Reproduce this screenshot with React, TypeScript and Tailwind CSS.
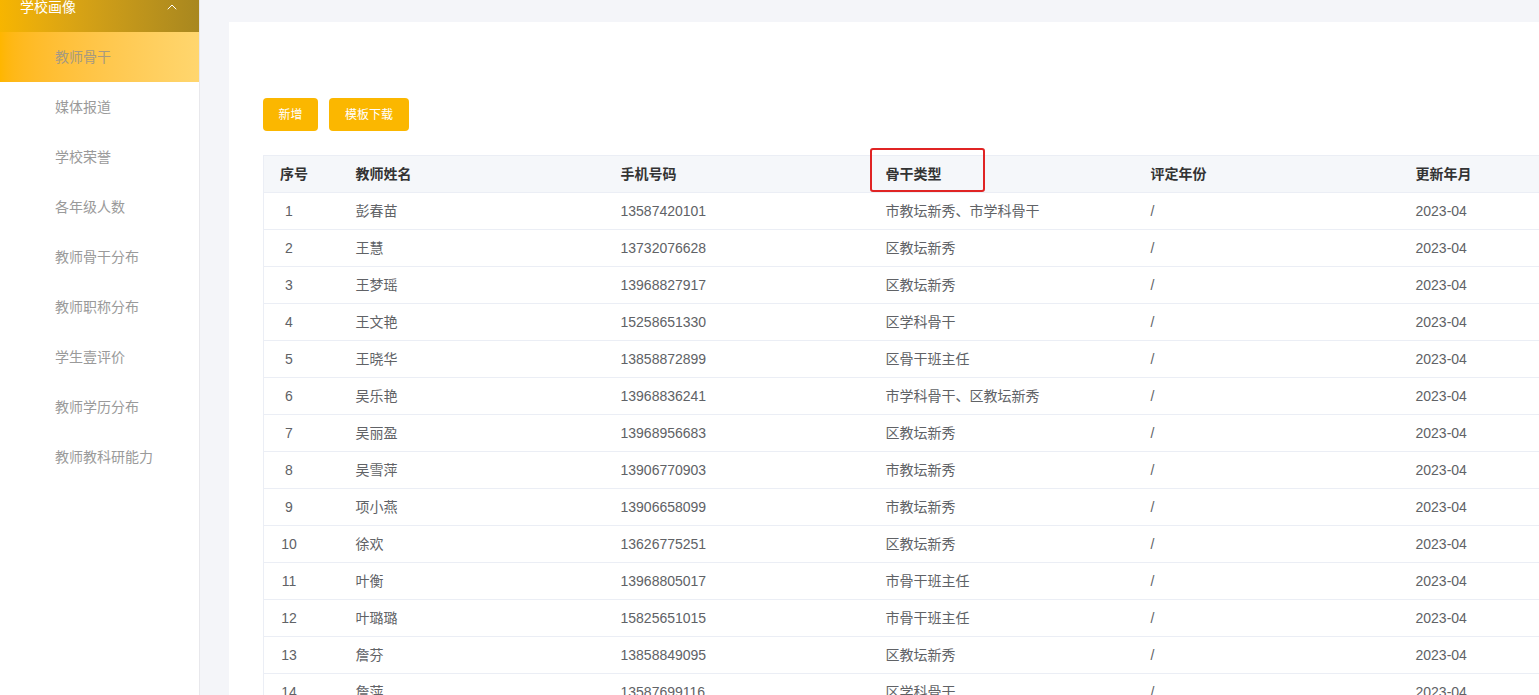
import { ChevronUp } from 'lucide-react';

const menu = ['媒体报道', '学校荣誉', '各年级人数', '教师骨干分布', '教师职称分布', '学生壹评价', '教师学历分布', '教师教科研能力'];

const rows: [string, string, string][] = [
  ['彭春苗', '13587420101', '市教坛新秀、市学科骨干'],
  ['王慧', '13732076628', '区教坛新秀'],
  ['王梦瑶', '13968827917', '区教坛新秀'],
  ['王文艳', '15258651330', '区学科骨干'],
  ['王晓华', '13858872899', '区骨干班主任'],
  ['吴乐艳', '13968836241', '市学科骨干、区教坛新秀'],
  ['吴丽盈', '13968956683', '区教坛新秀'],
  ['吴雪萍', '13906770903', '市教坛新秀'],
  ['项小燕', '13906658099', '市教坛新秀'],
  ['徐欢', '13626775251', '区教坛新秀'],
  ['叶衡', '13968805017', '市骨干班主任'],
  ['叶璐璐', '15825651015', '市骨干班主任'],
  ['詹芬', '13858849095', '区教坛新秀'],
  ['詹萍', '13587699116', '区学科骨干'],
];

export default function App() {
  return (
    <div
      className="flex h-[695px] w-[1539px] overflow-hidden bg-[#f4f5f9] text-sm"
      style={{ fontFamily: '"Liberation Sans", "Noto Sans CJK SC", sans-serif' }}
    >
      {/* Sidebar */}
      <aside className="w-[200px] shrink-0 bg-white border-r border-[#e8e8ec] overflow-hidden">
        <div className="-mt-[18px]">
          <div className="flex h-[50px] items-center justify-between pl-5 pr-[19px] bg-gradient-to-r from-[#f7b500] to-[#a8871f] text-white">
            <span>学校画像</span>
            <ChevronUp className="w-4 h-4" strokeWidth={1.5} />
          </div>
          <div className="flex h-[50px] items-center pl-[55px] bg-gradient-to-r from-[#ffb600] to-[#ffd66e] text-[#a69a80]">
            教师骨干
          </div>
          {menu.map((m) => (
            <div key={m} className="flex h-[50px] items-center pl-[55px] text-[#9a9a9a]">
              {m}
            </div>
          ))}
        </div>
      </aside>

      {/* Main */}
      <main className="flex-1 pl-[29px] pt-[22px] min-w-0">
        <div className="relative h-full bg-white pl-[34px] pt-[76px]">
          <div className="flex gap-[11px]">
            <button className="h-[33px] w-[55px] rounded bg-[#fbb700] text-xs text-white">新增</button>
            <button className="h-[33px] w-[80px] rounded bg-[#fbb700] text-xs text-white">模板下载</button>
          </div>

          <table className="mt-6 w-[1401px] table-fixed border-collapse border-l border-t border-[#ebeef5] text-[#606266]">
            <colgroup>
              <col className="w-[76px]" />
              <col className="w-[265px]" />
              <col className="w-[265px]" />
              <col className="w-[265px]" />
              <col className="w-[265px]" />
              <col className="w-[265px]" />
            </colgroup>
            <thead>
              <tr className="h-[37px] bg-[#f5f7fa] text-left text-[#333]">
                <th className="px-4 font-bold border-b border-[#ebeef5]">序号</th>
                <th className="px-4 font-bold border-b border-[#ebeef5]">教师姓名</th>
                <th className="px-4 font-bold border-b border-[#ebeef5]">手机号码</th>
                <th className="px-4 font-bold border-b border-[#ebeef5]">骨干类型</th>
                <th className="px-4 font-bold border-b border-[#ebeef5]">评定年份</th>
                <th className="px-4 font-bold border-b border-[#ebeef5]">更新年月</th>
              </tr>
            </thead>
            <tbody>
              {rows.map((r, i) => (
                <tr key={i} className="h-[37px]">
                  <td className="px-4 border-b border-[#ebeef5]">
                    <span className="inline-block w-[18px] text-center">{i + 1}</span>
                  </td>
                  <td className="px-4 border-b border-[#ebeef5]">{r[0]}</td>
                  <td className="px-4 border-b border-[#ebeef5]">{r[1]}</td>
                  <td className="px-4 border-b border-[#ebeef5]">{r[2]}</td>
                  <td className="px-4 border-b border-[#ebeef5]">/</td>
                  <td className="px-4 border-b border-[#ebeef5]">2023-04</td>
                </tr>
              ))}
            </tbody>
          </table>

          {/* annotation box */}
          <div className="absolute left-[641px] top-[126px] h-[44px] w-[115px] rounded-[3px] border-2 border-[#e02424]" />
        </div>
      </main>
    </div>
  );
}
